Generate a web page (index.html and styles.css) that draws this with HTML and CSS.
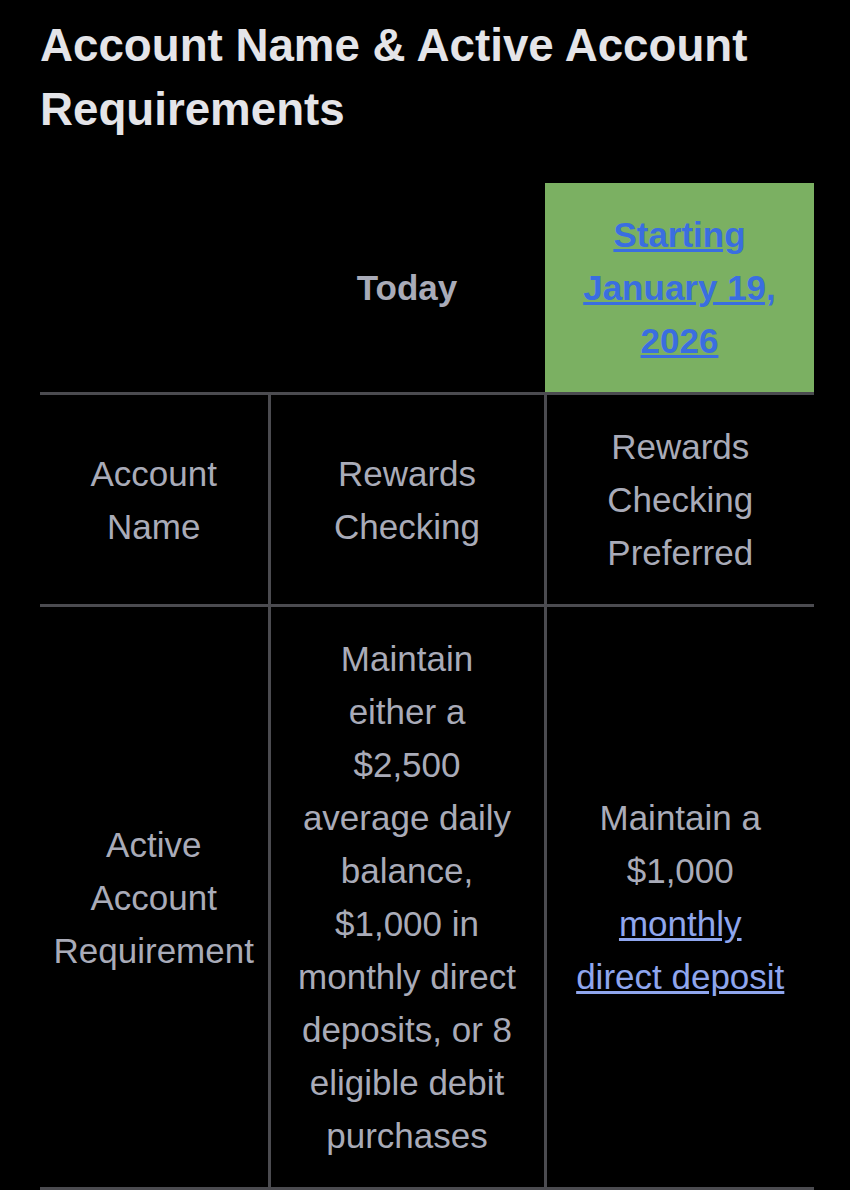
FILE: index.html
```html
<!DOCTYPE html>
<html lang="en">
<head>
<meta charset="utf-8">
<title>Account Name &amp; Active Account Requirements</title>
<link rel="stylesheet" href="styles.css">
</head>
<body>
<main class="page">
  <h2 class="title">Account Name &amp; Active Account Requirements</h2>
  <table class="compare">
    <colgroup>
      <col class="c1">
      <col class="c2">
      <col class="c3">
    </colgroup>
    <thead>
      <tr>
        <th class="blank"></th>
        <th class="head">Today</th>
        <th class="head highlight"><a href="#" class="head-link">Starting January 19, 2026</a></th>
      </tr>
    </thead>
    <tbody>
      <tr>
        <td class="label">Account Name</td>
        <td>Rewards Checking</td>
        <td class="last">Rewards Checking Preferred</td>
      </tr>
      <tr>
        <td class="label">Active Account Requirement</td>
        <td>Maintain either a $2,500 average daily balance, $1,000 in monthly direct deposits, or 8 eligible debit purchases</td>
        <td class="last">Maintain a $1,000 <a href="#" class="body-link">monthly direct deposit</a></td>
      </tr>
    </tbody>
  </table>
</main>
</body>
</html>
```

FILE: styles.css
```css
html, body {
  margin: 0;
  padding: 0;
  background: #000;
}

body {
  font-family: "Liberation Sans", Arial, Helvetica, sans-serif;
  width: 850px;
  height: 1190px;
  overflow: hidden;
}

.page {
  padding: 14px 36px 0 40px;
}

.title {
  margin: 0 0 41px 0;
  font-size: 45.7px;
  line-height: 64px;
  font-weight: 700;
  color: #e4e4e8;
}

.compare {
  width: 774px;
  table-layout: fixed;
  border-collapse: collapse;
  font-size: 35px;
  line-height: 53px;
  color: #a9abb8;
  text-align: center;
}

.c1 { width: 229px; }
.c2 { width: 276px; }
.c3 { width: 269px; }

.compare th,
.compare td {
  padding: 25px 24px;
  vertical-align: middle;
}

.compare .label,
.compare .blank {
  padding-left: 8px;
  padding-right: 8px;
}

.compare .last,
.compare .highlight {
  padding-left: 28px;
  padding-right: 28px;
}

.compare th {
  font-weight: 700;
  border-bottom: 3px solid #4b4b50;
}

.compare td {
  border: 3px solid #4b4b50;
}

.compare tr > td:first-child { border-left: none; }
.compare tr > td:last-child { border-right: none; }

.highlight {
  background: #7bb062;
}

.head-link {
  color: #3a6ee0;
  text-decoration: underline;
}

.body-link {
  color: #8fa6ee;
  text-decoration: underline;
}
```
